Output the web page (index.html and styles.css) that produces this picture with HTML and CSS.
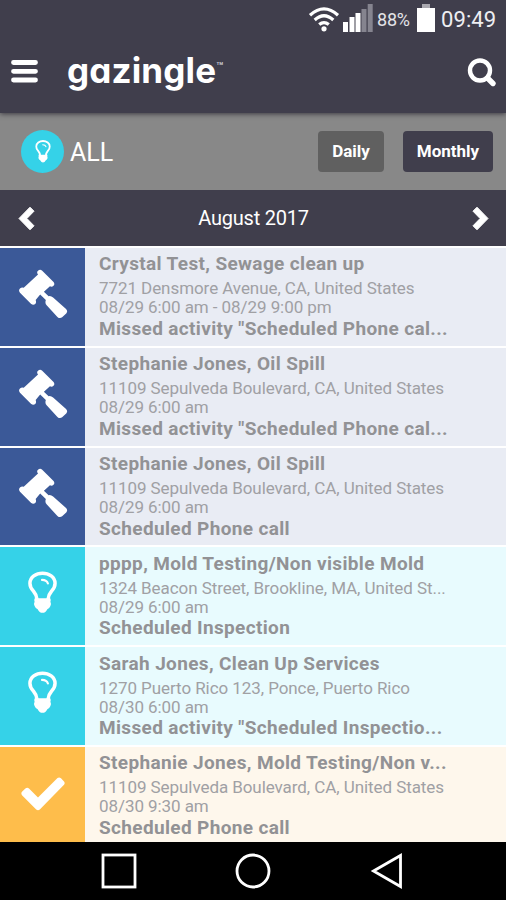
FILE: index.html
```html
<!DOCTYPE html>
<html lang="en">
<head>
<meta charset="utf-8">
<title>gazingle</title>
<link rel="stylesheet" href="styles.css">
</head>
<body>
<svg class="defs" aria-hidden="true">
  <symbol id="gavel" viewBox="0 0 50 50">
    <path d="M19.4 1.3Q21.5-.9 23.7 1.3L35 12.6Q37 14.8 35.2 16.6Q33.6 18.2 31.6 17.2L25.4 22.6L30.2 27.2Q32.6 26.6 34.8 28.6L48 40.4Q50.2 42.6 48.2 44.8L44 48.8Q41.6 50.6 39.2 48.4L28.2 36.6Q26.2 34.4 27.4 31L21.6 25.6L17 31.2Q18 33.6 16.6 35.2Q14.4 37 12.2 34.9L1 23.6Q-.9 21.4 1 19.4Q2.8 17.8 4.8 18.6L19.4 5Q17.6 3 19.4 1.3Z" fill="currentColor"/>
  </symbol>
  <symbol id="bulb" viewBox="0 0 30 44">
    <path d="M9.3 29Q9 24.5 5.7 20.7Q2 17 2 12.5Q2 7.8 6 4.8Q9.8 2 15 2T24 4.8Q28 7.8 28 12.5Q28 17 24.3 20.7Q21 24.5 20.7 29" fill="none" stroke="currentColor" stroke-width="3.6"/>
    <path d="M7 28H23Q24 30 23.2 31.5Q24.4 34 23.2 36Q22.2 38.4 20 39.2Q18.3 43 15 43T10 39.2Q7.8 38.4 6.8 36Q5.6 34 6.8 31.5Q6 30 7 28Z" fill="currentColor"/>
    <path d="M14.5 9Q19.5 9.1 20.6 12.7" fill="none" stroke="currentColor" stroke-width="2.2" stroke-linecap="round"/>
  </symbol>
  <symbol id="check" viewBox="0 0 44 34">
    <path d="M36.5 1Q38.2-.3 40 1.3L43 4.5Q44.3 6.2 43 7.8L18.8 32.5Q17 34 15.2 32.5L1 18.2Q-.3 16.5 1 14.8L4.4 11.5Q6.2 10 8 11.5L17 20.4Z" fill="currentColor"/>
  </symbol>
  <symbol id="chevron" viewBox="0 0 17 25">
    <path d="M12 1.2L16 5.2L8.9 12.5L16 19.8L12 23.8L1 12.5Z" fill="currentColor" stroke="currentColor" stroke-linejoin="round"/>
  </symbol>
</svg>

<header class="app-header">
  <div class="status-bar">
    <svg class="wifi" viewBox="0 0 32 26"><g fill="none" stroke="currentColor" stroke-width="3.2"><path d="M2 9.2Q16-3.5 30 9.2"/><path d="M6.7 14Q16 5.5 25.3 14"/><path d="M11.2 18.6Q16 14.6 20.8 18.6"/></g><circle cx="16" cy="22.8" r="2.6" fill="currentColor"/></svg>
    <svg class="signal" viewBox="0 0 30 28"><path d="M0 18h5v10H0zM6.5 13h5v15h-5zM12.5 9h5v19h-5z" fill="#fff"/><path d="M18.5 5h5v23h-5zM24.7 0h5v28h-5z" fill="#85848f"/></svg>
    <span class="percent">88%</span>
    <svg class="battery" viewBox="0 0 18 28"><path d="M5 0h8v4H5z" fill="#aaa9b0"/><path d="M0 4h18v24H0z" fill="#fff"/></svg>
    <span class="clock">09:49</span>
  </div>
  <div class="toolbar">
    <svg class="menu" viewBox="0 0 27 23"><path d="M2.5 2.5h22M2.5 11.3h22M2.5 20h22" stroke="#fff" stroke-width="4.8" stroke-linecap="round"/></svg>
    <div class="logo"><span class="wordmark">gazingle</span><span class="tm">™</span></div>
    <svg class="search" viewBox="0 0 30 30"><circle cx="13" cy="12.5" r="10" fill="none" stroke="#fff" stroke-width="4.4"/><path d="M20.5 20L26 25.5" stroke="#fff" stroke-width="5.4" stroke-linecap="round"/></svg>
  </div>
</header>

<section class="filter-bar">
  <span class="badge"><svg viewBox="0 0 30 44"><use href="#bulb"/></svg></span>
  <span class="filter-name">ALL</span>
  <button class="btn daily">Daily</button>
  <button class="btn monthly">Monthly</button>
</section>

<nav class="month-bar">
  <svg class="arrow" viewBox="0 0 17 25"><use href="#chevron"/></svg>
  <span class="month">August 2017</span>
  <svg class="arrow next" viewBox="0 0 17 25"><use href="#chevron"/></svg>
</nav>

<main class="list">
  <article class="item blue">
    <div class="tile"><svg class="gavel"><use href="#gavel"/></svg></div>
    <div class="body"><h2>Crystal Test, Sewage clean up</h2><p>7721 Densmore Avenue, CA, United States</p><p class="date">08/29 6:00 am - 08/29 9:00 pm</p><h3>Missed activity "Scheduled Phone cal...</h3></div>
  </article>
  <article class="item blue">
    <div class="tile"><svg class="gavel"><use href="#gavel"/></svg></div>
    <div class="body"><h2>Stephanie Jones, Oil Spill</h2><p>11109 Sepulveda Boulevard, CA, United States</p><p class="date">08/29 6:00 am</p><h3>Missed activity "Scheduled Phone cal...</h3></div>
  </article>
  <article class="item blue">
    <div class="tile"><svg class="gavel"><use href="#gavel"/></svg></div>
    <div class="body"><h2>Stephanie Jones, Oil Spill</h2><p>11109 Sepulveda Boulevard, CA, United States</p><p class="date">08/29 6:00 am</p><h3>Scheduled Phone call</h3></div>
  </article>
  <article class="item cyan">
    <div class="tile"><svg class="bulb"><use href="#bulb"/></svg></div>
    <div class="body"><h2>pppp, Mold Testing/Non visible Mold</h2><p>1324 Beacon Street, Brookline, MA, United St...</p><p class="date">08/29 6:00 am</p><h3>Scheduled Inspection</h3></div>
  </article>
  <article class="item cyan">
    <div class="tile"><svg class="bulb"><use href="#bulb"/></svg></div>
    <div class="body"><h2>Sarah Jones, Clean Up Services</h2><p>1270 Puerto Rico 123, Ponce, Puerto Rico</p><p class="date">08/30 6:00 am</p><h3>Missed activity "Scheduled Inspectio...</h3></div>
  </article>
  <article class="item amber">
    <div class="tile"><svg class="check"><use href="#check"/></svg></div>
    <div class="body"><h2>Stephanie Jones, Mold Testing/Non v...</h2><p>11109 Sepulveda Boulevard, CA, United States</p><p class="date">08/30 9:30 am</p><h3>Scheduled Phone call</h3></div>
  </article>
</main>

<footer class="nav-bar">
  <svg viewBox="0 0 36 36"><rect x="2" y="2" width="32" height="32"/></svg>
  <svg viewBox="0 0 36 36"><circle cx="18" cy="18" r="16"/></svg>
  <svg viewBox="0 0 36 36"><path d="M4.5 18L31.5 2.5V33.5Z"/></svg>
</footer>
</body>
</html>
```
FILE: styles.css
```css
* { box-sizing: border-box; margin: 0; padding: 0; }
body {
  width: 506px;
  height: 900px;
  overflow: hidden;
  display: flex;
  flex-direction: column;
  background: #fff;
  font-family: Roboto, "Liberation Sans", sans-serif;
}
svg { display: block; flex: none; }
.defs { position: absolute; width: 0; height: 0; }

.app-header {
  flex: none;
  height: 113px;
  background: #403e4c;
  color: #fff;
  box-shadow: 0 1px 5px rgba(40, 38, 48, .8);
  z-index: 1;
}
.status-bar {
  height: 38px;
  display: flex;
  align-items: center;
  justify-content: flex-end;
  padding-right: 9px;
}
.wifi { width: 32px; height: 26px; margin: 0 3px 0 0; }
.signal { width: 30px; height: 28px; margin: -2px 4px 0 0; }
.percent { width: 35px; font-size: 18px; letter-spacing: -.2px; color: #e4e4e8; white-space: nowrap; }
.battery { width: 18px; height: 28px; margin: -2px 6px 0 5px; }
.clock { width: 56px; font-size: 22px; letter-spacing: .1px; color: #eeeef2; white-space: nowrap; }
.toolbar { height: 75px; display: flex; align-items: flex-start; padding: 0 9px 0 11px; }
.menu { width: 27px; height: 23px; margin-top: 22px; }
.logo { display: flex; margin-left: 29px; height: 64px; flex: 1; align-items: flex-start; }
.wordmark {
  font: 700 35px/64px Inter, sans-serif;
  font-feature-settings: "cv11";
  letter-spacing: .15px;
}
.tm { font: 700 11px/10px Inter, sans-serif; margin-top: 23px; color: #c4c3ca; }
.search { width: 30px; height: 30px; margin-top: 20px; }

.filter-bar {
  flex: none;
  height: 77px;
  background: #888;
  display: flex;
  align-items: center;
  padding: 0 13px 0 21px;
}
.badge {
  width: 43px;
  height: 43px;
  border-radius: 50%;
  background: #35d2e8;
  display: flex;
  align-items: center;
  justify-content: center;
  color: #fff;
}
.badge svg { width: 16px; height: 23px; margin-top: -1px; }
.filter-name { flex: 1; margin-left: 6px; padding-top: 2px; font-size: 25px; color: #fff; }
.btn {
  height: 41px;
  border: 0;
  border-radius: 4px;
  color: #fff;
  font: 700 17px/40px Roboto, sans-serif;
  padding-bottom: 2px;
}
.daily { width: 66px; background: #606060; margin-right: 19px; }
.monthly { width: 90px; background: #403e4c; }

.month-bar {
  flex: none;
  height: 56px;
  background: #403e4c;
  display: flex;
  align-items: center;
  justify-content: space-between;
  padding: 0 17px 0 18px;
  color: #fff;
}
.arrow { width: 17px; height: 25px; }
.next { transform: scaleX(-1); }
.month { font-size: 20px; letter-spacing: -.25px; }

.list {
  flex: none;
  height: 596px;
  padding-top: 2px;
  overflow: hidden;
  display: flex;
  flex-direction: column;
  gap: 2px;
}
.item { flex: none; height: 97.8px; display: flex; color: #929295; }
.tile {
  width: 85px;
  display: flex;
  align-items: center;
  justify-content: center;
  color: #fff;
}
.body { flex: 1; padding: 4.4px 0 0 14px; white-space: nowrap; }
h2, h3 { font-size: 19px; font-weight: 700; letter-spacing: .35px; }
h2 { line-height: 24px; height: 26px; }
h3 { line-height: 19px; padding-top: 1.6px; }
p { font-size: 17px; line-height: 20px; height: 20px; letter-spacing: -.07px; color: #a0a0a4; }
.date { line-height: 19px; height: 19px; }
.blue .tile { background: #3b5998; }
.blue .body { background: #e9ecf4; }
.cyan .tile { background: #35d2e8; }
.cyan .body { background: #e8fbfe; }
.amber .tile { background: #febd4b; }
.amber .body { background: #fef7ec; }
.gavel { width: 49px; height: 50px; margin: -6px 0 0 1px; }
.bulb { width: 29px; height: 43px; margin-top: -7px; }
.check { width: 44px; height: 34px; margin-top: -4px; }

.nav-bar {
  flex: none;
  height: 58px;
  background: #000;
  display: flex;
  justify-content: center;
  gap: 98px;
  padding-top: 11px;
}
.nav-bar svg { width: 36px; height: 36px; fill: none; stroke: #fff; stroke-width: 2.8; }
```
